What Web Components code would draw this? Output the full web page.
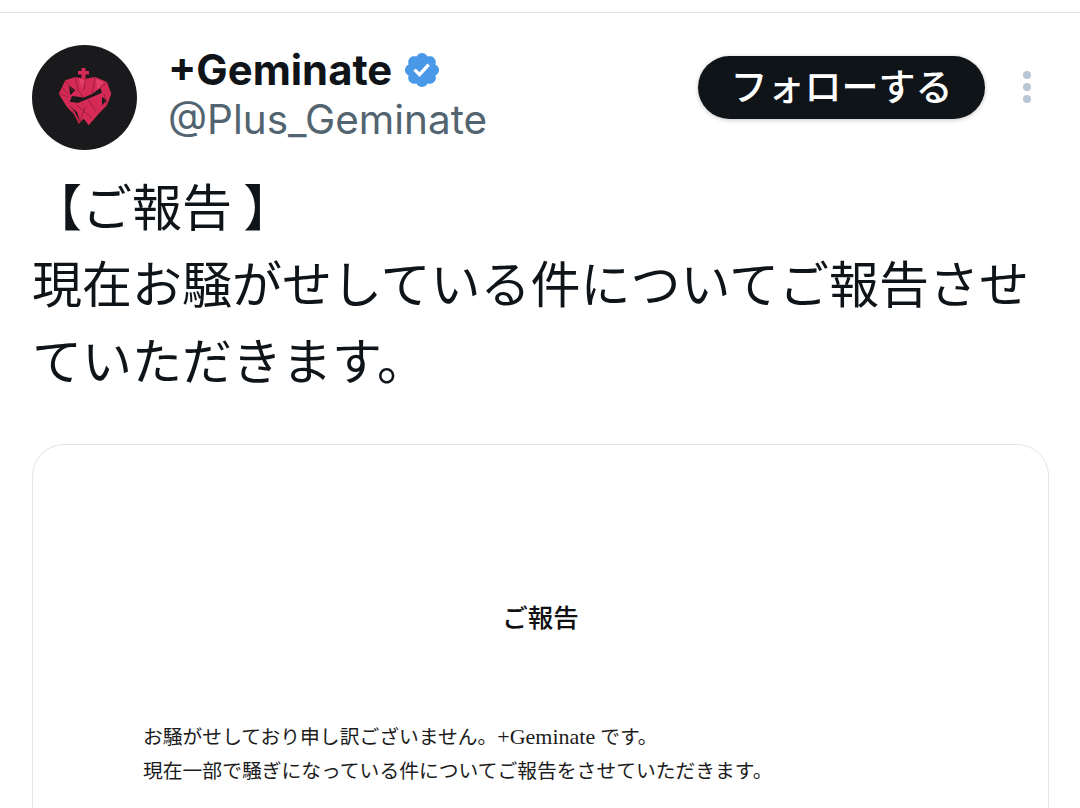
<!DOCTYPE html>
<html lang="ja">
<head>
<meta charset="utf-8">
<style>
html, body { margin:0; height:100%; overflow:hidden; background:#fff; }
</style>
</head>
<body>
<tweet-view>
	<tweet-header slot="header" name="+Geminate" handle="@Plus_Geminate"></tweet-header>
	<tweet-body slot="body">
		<div>【ご報告 】</div>
		<div>現在お騒がせしている件についてご報告させ</div>
		<div>ていただきます。</div>
	</tweet-body>
	<report-card slot="media"></report-card>
</tweet-view>

<script>
class TweetView extends HTMLElement {
	constructor() {
		super();
		this.attachShadow({mode: 'open'}).innerHTML = `
		<style>
		:host {
			display:block;
			height:808px;
			overflow:hidden;
			box-sizing:border-box;
			border-top:1px solid #dfe3e6;
			margin-top:12px;
			padding:32px 31px 0 32px;
		}
		</style>
		<slot name="header"></slot>
		<slot name="body"></slot>
		<slot name="media"></slot>`;
	}
}

class TweetHeader extends HTMLElement {
	constructor() {
		super();
		this.attachShadow({mode: 'open'}).innerHTML = `
		<style>
		:host {
			display:flex;
			align-items:flex-start;
			height:105px;
		}
		.avatar { width:105px; height:105px; flex:none; display:block; }
		.names {
			flex:1;
			margin-left:31px;
			font-family:Inter,"Noto Sans",sans-serif;
		}
		.name {
			display:flex;
			align-items:center;
			height:50px;
			font-size:41.800px;
			font-weight:700;
			color:#0f1419;
		}
		.badge { width:40px; height:40px; margin-left:10px; }
		.handle {
			font-size:40.500px;
			line-height:50px;
			color:#536471;
		}
		.follow {
			flex:none;
			margin-top:11px;
			width:287px;
			height:63px;
			padding-bottom:5px;
			box-sizing:border-box;
			border-radius:32px;
			background:#0f1419;
			color:#fff;
			display:flex;
			align-items:center;
			justify-content:center;
			font:500 37px "Noto Sans CJK JP",sans-serif;
			box-shadow:0 1px 4px rgba(15,20,25,.25);
		}
		.more {
			flex:none;
			width:8px;
			margin:26px 18px 0 38px;
			display:flex;
			flex-direction:column;
			gap:4px;
		}
		.more i { display:block; width:8px; height:8px; border-radius:50%; background:#b9c6d3; }
		</style>
		<svg class="avatar" viewBox="0 0 105 105">
			<circle cx="52.5" cy="52.5" r="52.5" fill="#1a1a1c"/>
			<path d="M49.500 23h4v3h3.500v3.500h-3.500v4.500h-4v-4.500h-3.500v-3.500h3.500z" fill="#d42a55"/>
			<path d="M33.300 35.300L43.300 32l10 1.700L63.300 32 75 37l4.300 11.700L75 60.300l-8.300 8.400-10 11.600-5-6.600-5 5.300-4-9-7.700-8L26.700 48.700z" fill="#d42a55"/>
			<path d="M36.700 40.300l6.600 5-5 5z" fill="#1a1a1c"/>
			<path d="M68.300 43L60 49l-8.300 3.500L40 51l-2.300 5.700 8 1.300 11-4.500L70 47.700z" fill="#1a1a1c"/>
			<path d="M36.700 60.300l8.300 6.700 3.300 10-6.600-11.700z" fill="#1a1a1c"/>
			<path d="M70 52l5 3.300-5 5z" fill="#1a1a1c"/>
			<g fill="none" stroke="#8f1d3b" stroke-width=".8">
				<path d="M43.300 32L46 45l5.700 7.700M53.300 33.700L52 45M63.300 32L60 49M75 37l-7 6M33 35.300l8 11M26.700 48.700l10 3.300M30 42l6.700 8"/>
				<path d="M45 60.300L60 73M56.700 55.300L64 66M72 49l3 12M53 62l-5 15M40 66l7 12"/>
			</g>
			<path d="M47 34l6 1-3 9zM64 34l8 3-7 8z" fill="#ee4672" opacity=".7"/>
		</svg>
		<div class="names">
			<div class="name"><span id="name"></span>
				<svg class="badge" viewBox="0 0 22 22">
					<path fill="#4a99e9" d="M20.396 11c-.018-.646-.215-1.275-.57-1.816-.354-.54-.852-.972-1.438-1.246.223-.607.27-1.264.14-1.897-.131-.634-.437-1.218-.882-1.687-.47-.445-1.053-.75-1.687-.882-.633-.13-1.29-.083-1.897.14-.273-.587-.704-1.086-1.245-1.44S11.647 1.62 11 1.604c-.646.017-1.273.213-1.813.568s-.969.854-1.24 1.44c-.608-.223-1.267-.272-1.902-.14-.635.13-1.22.436-1.69.882-.445.47-.749 1.055-.878 1.688-.13.633-.08 1.29.144 1.896-.587.274-1.087.705-1.443 1.245-.356.54-.555 1.17-.574 1.817.02.647.218 1.276.574 1.817.356.54.856.972 1.443 1.245-.224.606-.274 1.263-.144 1.896.13.634.433 1.218.877 1.688.47.443 1.054.747 1.687.878.633.132 1.29.084 1.897-.136.274.586.705 1.084 1.246 1.439.54.354 1.17.551 1.816.569.647-.016 1.276-.213 1.817-.567s.972-.854 1.245-1.44c.604.239 1.266.296 1.903.164.636-.132 1.22-.447 1.68-.907.46-.46.776-1.044.908-1.681s.075-1.299-.165-1.903c.586-.274 1.084-.705 1.439-1.246.354-.54.551-1.17.569-1.816z"/>
					<path fill="#fff" d="M9.662 14.850l-3.429-3.428 1.293-1.302 2.072 2.072 4.4-4.794 1.347 1.246z"/>
				</svg>
			</div>
			<div class="handle" id="handle"></div>
		</div>
		<div class="follow">フォローする</div>
		<div class="more"><i></i><i></i><i></i></div>`;
	}

	connectedCallback() {
		this.shadowRoot.getElementById('name').textContent = this.getAttribute('name');
		this.shadowRoot.getElementById('handle').textContent = this.getAttribute('handle');
	}
}

class TweetBody extends HTMLElement {
	constructor() {
		super();
		this.attachShadow({mode: 'open'}).innerHTML = `
		<style>
		:host {
			display:block;
			margin-top:16px;
			font:400 50px/77px "Noto Sans CJK JP",sans-serif;
			color:#0f1419;
			white-space:nowrap;
		}
		</style>
		<slot></slot>`;
	}
}

class ReportCard extends HTMLElement {
	constructor() {
		super();
		this.attachShadow({mode: 'open'}).innerHTML = `
		<style>
		:host {
			display:block;
			margin-top:47px;
			height:500px;
			box-sizing:border-box;
			border:1px solid #e1e5e8;
			border-radius:32px;
			padding-top:154px;
			font-family:"Liberation Serif","Noto Sans CJK JP",serif;
			color:#1c1c1c;
			white-space:nowrap;
		}
		h1 {
			margin:0;
			text-align:center;
			font:500 25.500px/34px "Noto Sans CJK JP",sans-serif;
			color:#111;
		}
		.lines {
			margin:87px 0 0 110px;
			font-size:19.800px;
			line-height:34px;
		}
		.latin { font-size:22px; }
		</style>
		<h1>ご報告</h1>
		<div class="lines">
			<div>お騒がせしており申し訳ございません。<span class="latin">+Geminate</span> です。</div>
			<div>現在一部で騒ぎになっている件についてご報告をさせていただきます。</div>
		</div>`;
	}
}

window.customElements.define('tweet-view', TweetView);
window.customElements.define('tweet-header', TweetHeader);
window.customElements.define('tweet-body', TweetBody);
window.customElements.define('report-card', ReportCard);
</script>
</body>
</html>
